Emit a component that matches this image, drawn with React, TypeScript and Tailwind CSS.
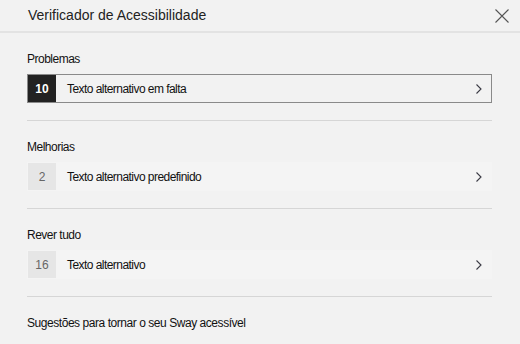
import React from "react";

function Chevron() {
  return (
    <svg width="8" height="12" viewBox="0 0 8 12" className="shrink-0">
      <path d="M1.5 1.5 L6 6 L1.5 10.5" fill="none" stroke="#3a3a44" strokeWidth="1.1" />
    </svg>
  );
}

function Row({ count, text, active }: { count: string; text: string; active?: boolean }) {
  return (
    <div
      className={
        "flex h-[29px] items-center " +
        (active ? "border border-[#8a8a8a] bg-[#f2f2f2]" : "border border-transparent bg-[#f4f4f4]")
      }
    >
      <div
        className={
          "flex h-full w-[28px] items-center justify-center text-[12px] " +
          (active ? "bg-[#222222] text-white font-bold" : "bg-[#e6e6e6] text-[#666666]")
        }
      >
        {count}
      </div>
      <div className="ml-[11px] flex-1 text-[12px] tracking-[-0.55px] text-[#111]">{text}</div>
      <div className="mr-[8px] flex items-center">
        <Chevron />
      </div>
    </div>
  );
}

export default function App() {
  return (
    <div
      className="h-[344px] w-[520px] overflow-hidden bg-[#f2f2f2] text-[#111]"
      style={{ fontFamily: '"Liberation Sans", Arial, sans-serif' }}
    >
      <div className="flex h-[33px] items-center justify-between border-b-2 border-[#e3e3e3] pl-[28px] pr-[10px]">
        <div className="text-[14px] text-[#222]">Verificador de Acessibilidade</div>
        <svg width="16" height="16" viewBox="0 0 16 16">
          <path d="M1.5 1.5 L14.5 14.5 M14.5 1.5 L1.5 14.5" stroke="#555" strokeWidth="1.1" />
        </svg>
      </div>
      <div className="pl-[27px] pr-[28px]">
        <div className="border-b border-[#d6d6d6] pb-[17px] pt-[17px]">
          <div className="mb-[5px] text-[12px] leading-[19px] tracking-[-0.5px]">Problemas</div>
          <Row count="10" text="Texto alternativo em falta" active />
        </div>
        <div className="border-b border-[#d6d6d6] pb-[17px] pt-[17px]">
          <div className="mb-[5px] text-[12px] leading-[19px] tracking-[-0.5px]">Melhorias</div>
          <Row count="2" text="Texto alternativo predefinido" />
        </div>
        <div className="border-b border-[#d6d6d6] pb-[17px] pt-[17px]">
          <div className="mb-[5px] text-[12px] leading-[19px] tracking-[-0.5px]">Rever tudo</div>
          <Row count="16" text="Texto alternativo" />
        </div>
        <div className="pt-[17px] text-[12px] leading-[19px] tracking-[-0.45px]">Sugestões para tornar o seu Sway acessível</div>
      </div>
    </div>
  );
}
